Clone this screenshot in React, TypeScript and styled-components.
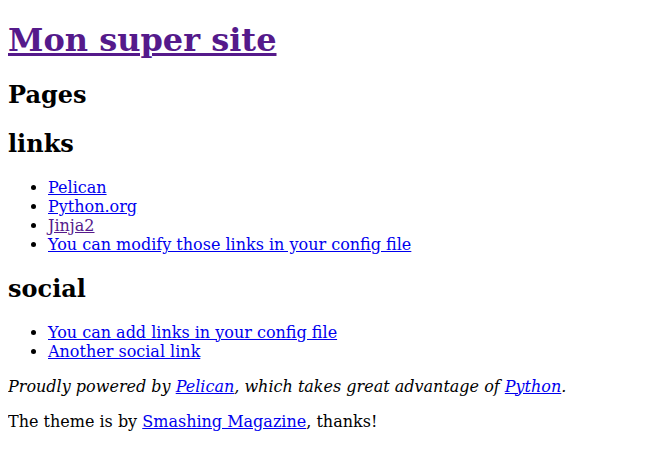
import React from "react";
import styled, { createGlobalStyle } from "styled-components";

const Global = createGlobalStyle`
  html, body { margin: 0; padding: 0; background: #fff; }
  body {
    margin: 8px;
    font-family: "DejaVu Serif", serif;
    font-size: 16px;
    color: #000;
  }
`;

const Page = styled.div`
  display: block;
`;

const SiteTitle = styled.h1`
  font-size: 32px;
  font-weight: bold;
  margin: 12.5px 0 21.44px;
`;

const SectionTitle = styled.h2`
  font-size: 24px;
  font-weight: bold;
  margin: 19.92px 0;
`;

const Link = styled.a<{ $visited?: boolean }>`
  color: ${(p) => (p.$visited ? "#551a8b" : "#0000ee")};
  text-decoration: underline;
`;

const List = styled.ul`
  list-style: disc;
  margin: 16px 0;
  padding-left: 40px;
`;

const Item = styled.li`
  display: list-item;
`;

const Credits = styled.address`
  font-style: italic;
  display: block;
`;

const Para = styled.p`
  margin: 16px 0;
`;

const links = [
  { label: "Pelican", visited: false },
  { label: "Python.org", visited: false },
  { label: "Jinja2", visited: true },
  { label: "You can modify those links in your config file", visited: false },
];

const social = ["You can add links in your config file", "Another social link"];

export default function App() {
  return (
    <Page>
      <Global />
      <SiteTitle>
        <Link $visited href="#">Mon super site</Link>
      </SiteTitle>
      <SectionTitle>Pages</SectionTitle>
      <SectionTitle>links</SectionTitle>
      <List>
        {links.map((l) => (
          <Item key={l.label}>
            <Link $visited={l.visited} href="#">{l.label}</Link>
          </Item>
        ))}
      </List>
      <SectionTitle>social</SectionTitle>
      <List>
        {social.map((s) => (
          <Item key={s}>
            <Link href="#">{s}</Link>
          </Item>
        ))}
      </List>
      <Credits>
        Proudly powered by <Link href="#">Pelican</Link>, which takes great advantage of{" "}
        <Link href="#">Python</Link>.
      </Credits>
      <Para>
        The theme is by <Link href="#">Smashing Magazine</Link>, thanks!
      </Para>
    </Page>
  );
}
